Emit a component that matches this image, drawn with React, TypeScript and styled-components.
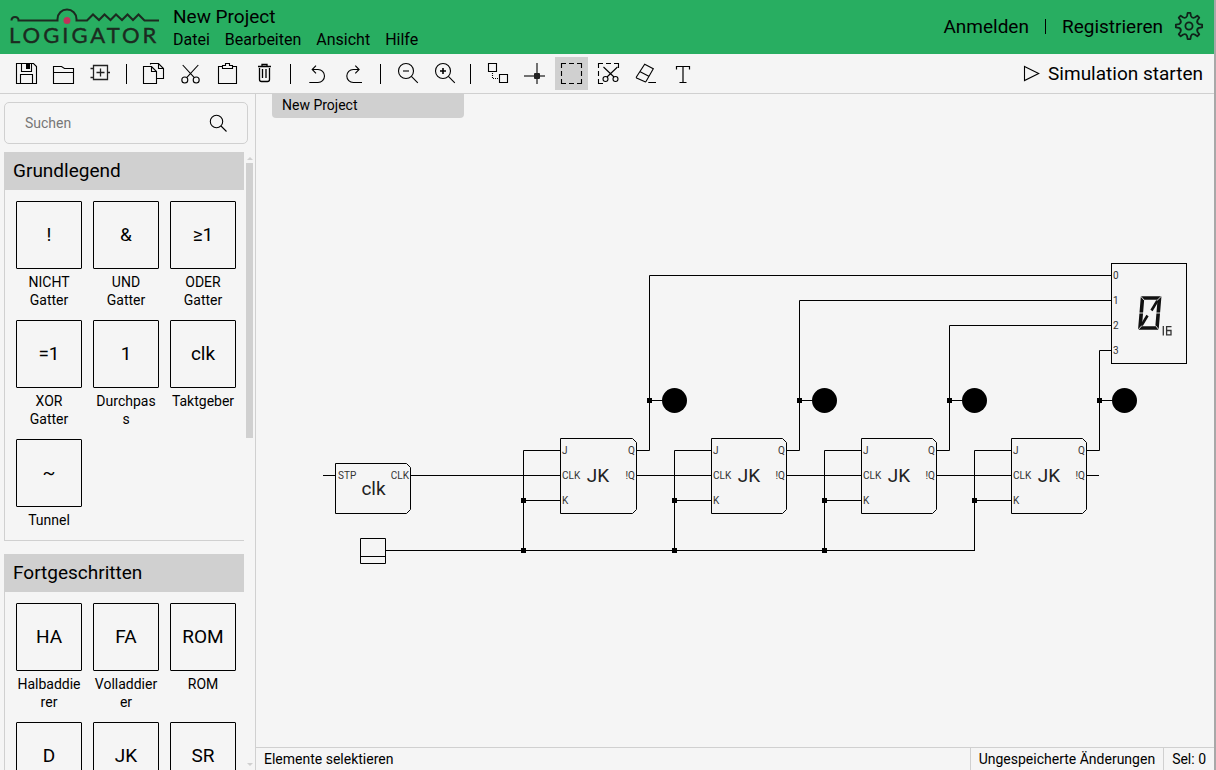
import React from 'react';
import styled, { createGlobalStyle } from 'styled-components';

const GlobalStyle = createGlobalStyle`
  *, *::before, *::after { box-sizing: border-box; }
  body {
    margin: 0;
    background: #f5f5f5;
    color: #000;
    font-family: Roboto, "Liberation Sans", sans-serif;
    font-size: 14px;
  }
  button, input { font: inherit; color: inherit; }
`;

const green = '#28ae61';
const line = '#d0d0d0';

const Page = styled.div`
  display: flex;
  flex-direction: column;
  height: 100vh;
  border-right: 2px solid #a8a8a8;
  background: #f5f5f5;
  overflow: hidden;
`;

const Header = styled.header`
  display: flex;
  align-items: center;
  flex: none;
  height: 54px;
  padding: 0 10px;
  background: ${green};
`;

const LogoSvg = styled.svg`
  display: block;
  flex: none;
  margin-right: 13px;
  font-family: Lato, sans-serif;
  font-size: 22px;
  letter-spacing: 3px;
`;

const Titles = styled.div`
  flex: 1;
  padding-top: 2px;
`;

const ProjectTitle = styled.h1`
  margin: 0;
  font-size: 19px;
  font-weight: 400;
  line-height: 24px;
`;

const Menu = styled.nav`
  display: flex;
  gap: 15px;
`;

const MenuButton = styled.button`
  padding: 0;
  border: 0;
  background: none;
  font-size: 16px;
  line-height: 22px;
`;

const Account = styled.div`
  display: flex;
  align-items: center;
  padding-bottom: 2px;
  font-size: 19px;
`;

const AccountLink = styled.a`
  color: inherit;
  text-decoration: none;
`;

const AccountDivider = styled.span`
  width: 1px;
  height: 15px;
  margin: 0 16px;
  background: #000;
`;

const PlainButton = styled.button`
  display: flex;
  align-items: center;
  padding: 0;
  border: 0;
  background: none;
`;

const SettingsButton = styled(PlainButton)`
  margin-left: 11px;
`;

const Toolbar = styled.div`
  display: flex;
  align-items: center;
  flex: none;
  gap: 4px;
  height: 40px;
  padding: 0 11px 0 10px;
  border-bottom: 1px solid ${line};
`;

const ToolButton = styled.button<{ $active?: boolean }>`
  display: grid;
  place-items: center;
  width: 33px;
  height: 33px;
  padding: 0;
  border: 0;
  background: ${(p) => (p.$active ? line : 'none')};
`;

const ToolDivider = styled.span`
  width: 1px;
  height: 20px;
  margin: 0 6px 0 5px;
  background: #000;
`;

const StartButton = styled(PlainButton)`
  gap: 4px;
  margin-left: auto;
  font-size: 19px;
`;

const Body = styled.div`
  display: flex;
  flex: 1;
  min-height: 0;
`;

const Sidebar = styled.aside`
  display: flex;
  flex-direction: column;
  flex: none;
  width: 256px;
  border-right: 1px solid ${line};
`;

const SearchBox = styled.label`
  display: flex;
  align-items: center;
  flex: none;
  height: 42px;
  margin: 8px 7px 8px 4px;
  padding: 0 18px 0 20px;
  border: 1px solid ${line};
  border-radius: 5px;
`;

const SearchInput = styled.input`
  flex: 1;
  min-width: 0;
  padding: 0;
  border: 0;
  outline: 0;
  background: none;
  &::placeholder { color: #777; opacity: 1; }
`;

const ListArea = styled.div`
  display: flex;
  flex: 1;
  min-height: 0;
`;

const Categories = styled.div`
  flex: 1;
  padding-left: 4px;
  overflow: hidden;
`;

const Category = styled.section`
  margin-bottom: 13px;
  border: solid ${line};
  border-width: 0 0 1px 1px;
`;

const CategoryTitle = styled.h2`
  margin: 0 0 0 -1px;
  padding-left: 9px;
  background: ${line};
  font-size: 19px;
  font-weight: 400;
  line-height: 38px;
`;

const Tiles = styled.div`
  display: grid;
  grid-template-columns: repeat(3, 66px);
  gap: 11px;
  padding: 11px;
`;

const Tile = styled.button`
  display: flex;
  flex-direction: column;
  gap: 4px;
  padding: 0;
  border: 0;
  background: none;
`;

const TileSymbol = styled.span`
  display: grid;
  place-items: center;
  width: 66px;
  height: 68px;
  padding-bottom: 2px;
  border: 1px solid #000;
  border-radius: 1px;
  font-size: 19px;
`;

const TileLabel = styled.span`
  width: 66px;
  line-height: 18px;
  overflow-wrap: anywhere;
`;

const ScrollTrack = styled.div`
  display: flex;
  flex-direction: column;
  align-items: center;
  justify-content: space-between;
  width: 11px;
  padding: 5px 2px 4px;
`;

const ScrollThumb = styled.span`
  width: 7px;
  height: 275px;
  margin: 3px 0 auto;
  background: ${line};
`;

const Arrow = styled.span<{ $down?: boolean }>`
  border: solid transparent;
  border-width: 0 3px;
  ${(p) => (p.$down ? 'border-top' : 'border-bottom')}: 3px solid ${line};
`;

const Workspace = styled.main`
  display: flex;
  flex-direction: column;
  flex: 1;
  min-width: 0;
`;

const Canvas = styled.div`
  position: relative;
  flex: 1;
  min-height: 0;
  overflow: hidden;
`;

const ProjectTab = styled.button`
  position: absolute;
  top: 0;
  left: 16px;
  width: 192px;
  height: 24px;
  padding: 0 10px 2px;
  border: 0;
  border-radius: 0 0 4px 4px;
  background: ${line};
  text-align: left;
`;

const Circuit = styled.svg`
  display: block;
  width: 100%;
  height: 100%;
`;

const StatusBar = styled.footer`
  display: flex;
  flex: none;
  height: 23px;
  border-top: 1px solid ${line};
  line-height: 22px;
`;

const StatusItem = styled.span<{ $grow?: boolean }>`
  flex: ${(p) => (p.$grow ? 1 : 'none')};
  padding: 0 8px;
  & + & { border-left: 1px solid ${line}; }
`;

const scissors = (
  <>
    <circle cx="4.8" cy="17" r="3" />
    <circle cx="16.2" cy="17" r="3" />
    <path d="M2.7 2 14.3 14.7M18.3 2 6.7 14.7" />
  </>
);

const magnifier = (
  <>
    <circle cx="9" cy="8" r="7.5" />
    <path d="M14.4 13.4 20.8 19.8" />
  </>
);

const dashes = 'M0 .5H21M0 20.5H21M.5 0V21M20.5 0V21';

const icons: Record<string, React.ReactNode> = {
  save: (
    <>
      <path d="M.5.5H17.5L20.5 3.5V20.5H.5ZM5.5.5V8.5H15.5V.5M4.5 20.5V11.5H16.5V20.5" />
      <path d="M10 1H14V6H10Z" fill="#000" stroke="none" />
    </>
  ),
  open: <path d="M.5 3.5H8.5L11.5 5.5H20.5V20.5H.5ZM.5 9.5H20.5" />,
  component: (
    <path d="M3.5 2.5H17.5V16.5H3.5ZM.5 5.5H3.5M.5 14.5H3.5M17.5 9.5H20M10.5 5.5V13.5M6.5 9.5H14.5" stroke="#222" strokeWidth="1.3" />
  ),
  copy: (
    <path d="M.5 3.5H8.5L13.5 8.5V20.5H.5ZM8.5 3.5V8.5H13.5M7.5 1.5V.5H15.5L20.5 5.5V15.5H14M15.5.5V5.5H20.5" />
  ),
  cut: scissors,
  paste: <path d="M5.5 3.5H1.5V20.5H19.5V3.5H15.5M5.5 2.5H8.5V.5H12.5V2.5H15.5V5.5H5.5Z" />,
  trash: (
    <path d="M4 3.5H17M8 3V1.5H13V3M5.5 5V16.5Q5.5 18.5 7.5 18.5H13.5Q15.5 18.5 15.5 16.5V5M8.5 6V15M12 6V15" strokeWidth="1.3" />
  ),
  undo: <path d="M2.3 19.5H11A6.4 6.4 0 0 0 11 6.5H5.5M9 2.6 5.2 6.5 9 10.4" />,
  redo: <path d="M18 19.5H9.3A6.4 6.4 0 0 1 9.3 6.5H14.8M11.3 2.6 15.1 6.5 11.3 10.4" />,
  zoomOut: (
    <>
      {magnifier}
      <path d="M6 8H12" />
    </>
  ),
  zoomIn: (
    <>
      {magnifier}
      <path d="M6 8H12M9 5V11" strokeWidth="1.6" />
    </>
  ),
  wire: (
    <>
      <path d="M1.5.5H9.5V8.5H1.5ZM12.5 11.5H20.5V19.5H12.5Z" />
      <path d="M5.5 10V15.5H12" strokeDasharray="1 1" />
    </>
  ),
  connect: (
    <>
      <path d="M0 13H21M13 0V21" stroke="#444" strokeWidth="1.5" />
      <rect x="10" y="10" width="6" height="6" rx="1" fill="#222" stroke="none" />
    </>
  ),
  select: <path d={dashes} strokeDasharray="5 3" />,
  cutArea: (
    <>
      <path d="M0 .5H21M.5 0V21M20.5 0V5M0 20.5H5" strokeDasharray="5 3" />
      <circle cx="7.5" cy="16" r="2.5" />
      <circle cx="17.5" cy="16" r="2.5" />
      <path d="M5.5 4 16 14M19.5 4 9 14" />
    </>
  ),
  eraser: <path d="M9.7 1.3 18.3 5.8 11 18.5Q10.6 19 10 18.8L1.6 15Q1.1 14.6 1.4 14ZM5.2 8.8 13.8 13.3M13.3 19.5H21" />,
  text: <path d="M4.5 6.5V3.5H17.5V6.5M11 3.5V19.5M7.5 19.5H14.5" strokeWidth="1.2" />,
  search: (
    <>
      <circle cx="8.5" cy="8.5" r="6.2" />
      <path d="M13 13 18.5 18.5" />
    </>
  ),
  play: <path d="M1.5 3.5 15.7 10.5 1.5 17.5Z" />,
};

function Icon({ name }: { name: string }) {
  return (
    <svg width="21" height="21" viewBox="0 0 21 21" fill="none" stroke="#000" strokeWidth="1.1" overflow="visible" aria-hidden>
      {icons[name]}
    </svg>
  );
}

const polar = (r: number, deg: number) => {
  const a = (deg * Math.PI) / 180;
  return `${(14 + r * Math.sin(a)).toFixed(2)} ${(14 - r * Math.cos(a)).toFixed(2)}`;
};

const gearPath =
  Array.from({ length: 8 }, (_, i) => {
    const t = i * 45;
    return `${i ? 'L' : 'M'}${polar(13.2, t - 6)}L${polar(13.2, t + 6)}L${polar(10.2, t + 11)}Q${polar(8, t + 22.5)} ${polar(10.2, t + 34)}`;
  }).join('') + 'Z';

function Logo() {
  return (
    <LogoSvg width="150" height="40" viewBox="0 0 150 40" role="img" aria-label="Logigator">
      <path
        d="M1.5 13.5Q1.5 10 5 10Q8.500 10 8.500 13.500H47.500V12A9.500 9.500 0 0 1 66.500 12V13.500H77L83 7.500 89 13 94.500 7.500 100.500 13 106 7.500 112 13 117.500 7.500 123 13 128.500 7.500 134.500 13.500H149"
        fill="none"
        stroke="#1c2a20"
        strokeWidth="2"
      />
      <circle cx="57" cy="13.500" r="3.500" fill="#c0335a" />
      <text x="-1" y="35.500" fill="#1c2a20" stroke="#1c2a20" strokeWidth="0.4">LOGIGATOR</text>
    </LogoSvg>
  );
}

const toolGroups = [
  [['save', 'Speichern'], ['open', 'Öffnen'], ['component', 'Neues Bauteil']],
  [['copy', 'Kopieren'], ['cut', 'Ausschneiden'], ['paste', 'Einfügen'], ['trash', 'Löschen']],
  [['undo', 'Rückgängig'], ['redo', 'Wiederholen']],
  [['zoomOut', 'Verkleinern'], ['zoomIn', 'Vergrößern']],
  [
    ['wire', 'Leitung zeichnen'],
    ['connect', 'Leitungen verbinden'],
    ['select', 'Elemente selektieren'],
    ['cutArea', 'Bereich ausschneiden'],
    ['eraser', 'Radierer'],
    ['text', 'Text'],
  ],
];

const categories = [
  {
    title: 'Grundlegend',
    tiles: [
      ['!', 'NICHT Gatter'],
      ['&', 'UND Gatter'],
      ['≥1', 'ODER Gatter'],
      ['=1', 'XOR Gatter'],
      ['1', 'Durchpass'],
      ['clk', 'Taktgeber'],
      ['~', 'Tunnel'],
    ],
  },
  {
    title: 'Fortgeschritten',
    tiles: [
      ['HA', 'Halbaddierer'],
      ['FA', 'Volladdierer'],
      ['ROM', 'ROM'],
      ['D', ''],
      ['JK', ''],
      ['SR', ''],
    ],
  },
];

function Pin({ x, y, end, children }: { x: number; y: number; end?: boolean; children: string }) {
  return (
    <text x={x} y={y + 4} fontSize="10" fill="#333" stroke="none" textAnchor={end ? 'end' : 'start'}>
      {children}
    </text>
  );
}

function FlipFlop({ x, width }: { x: number; width: number }) {
  const right = width + 0.5;
  return (
    <g transform={`translate(${x} 344)`}>
      <path d={`M.5.5H${right - 4}L${right} 4.500V71.500L${right - 4} 75.500H.5Z`} />
      <Pin x={2} y={12}>J</Pin>
      <Pin x={2} y={37}>CLK</Pin>
      <Pin x={2} y={62}>K</Pin>
      <Pin x={width - 1} y={12} end>Q</Pin>
      <Pin x={width - 1} y={37} end>!Q</Pin>
      <text x="38" y="44" fontSize="19" fill="#222" stroke="none" textAnchor="middle">JK</text>
    </g>
  );
}

const flipFlops = [
  { x: 304, width: 76, bus: 267.5 },
  { x: 455, width: 75, bus: 418.5 },
  { x: 605, width: 75, bus: 568.5 },
  { x: 755, width: 75, bus: 718.5 },
];
const outputs = [
  { x: 393.5, top: 181.5 },
  { x: 543.5, top: 206.5 },
  { x: 693.5, top: 231.5 },
  { x: 843.5, top: 256.5 },
];

function CircuitDrawing() {
  return (
    <Circuit fill="none" stroke="#000" strokeWidth="1" role="img" aria-label="Zähler aus vier JK-Flipflops">
      <path d="M67 381.500H79M155 381.500H304M381 381.500H455M530 381.500H605M680 381.500H755M830 381.500H843" />
      <path d="M130 456.500H718.500" />
      {flipFlops.map(({ x, width, bus }, i) => (
        <g key={x}>
          <path d={`M${x} 356.500H${bus}V457M${bus} 406.500H${x}`} />
          <rect x={bus - 2.5} y="404" width="5" height="5" fill="#000" stroke="none" />
          {i < 3 && <rect x={bus - 2.5} y="454" width="5" height="5" fill="#000" stroke="none" />}
          <FlipFlop x={x} width={width} />
        </g>
      ))}
      {outputs.map((o, i) => (
        <g key={o.x}>
          <path d={`M${flipFlops[i].x + flipFlops[i].width} 356.500H${o.x}V${o.top}H855M${o.x} 306.500H${o.x + 14}`} />
          <rect x={o.x - 2.5} y="304" width="5" height="5" fill="#000" stroke="none" />
          <circle cx={o.x + 25} cy="306.500" r="12.500" fill="#000" stroke="none" />
        </g>
      ))}
      <path d="M79.500 369.500H150.500L154.500 373.500V415.500L150.500 419.500H79.500Z" />
      <Pin x={82} y={381}>STP</Pin>
      <Pin x={153} y={381} end>CLK</Pin>
      <text x="117.500" y="401" fontSize="19" fill="#222" stroke="none" textAnchor="middle">clk</text>
      <path d="M104.500 444.500H129.500V469.500H104.500ZM104.500 462.500H129.500" />
      <rect x="855.500" y="169.500" width="75" height="100" />
      {outputs.map((o, i) => (
        <Pin key={i} x={857} y={o.top - 0.5}>{String(i)}</Pin>
      ))}
      <path d="M886.500 204H903.500L901 234H884Z" strokeWidth="3.600" stroke="#111" />
      <path d="M901.500 206.500 895.500 216.500M891.500 221.500 885.500 231.500" strokeWidth="2.600" stroke="#111" />
      <path
        d="M884.500 202 888.500 206.500M906 201.500 901 206.500M881.500 236.500 886 231.500M903.500 236.500 899.500 231.500M882.500 219H888M899.500 219H905"
        strokeWidth="0.900"
        stroke="#f5f5f5"
      />
      <path d="M907.300 232V241.500M915.500 232.600H910.600V240.900H915V236.500H910.600" stroke="#333" strokeWidth="1.300" />
    </Circuit>
  );
}

export default function App() {
  return (
    <Page>
      <GlobalStyle />
      <Header>
        <Logo />
        <Titles>
          <ProjectTitle>New Project</ProjectTitle>
          <Menu>
            {['Datei', 'Bearbeiten', 'Ansicht', 'Hilfe'].map((m) => (
              <MenuButton key={m}>{m}</MenuButton>
            ))}
          </Menu>
        </Titles>
        <Account>
          <AccountLink href="#login">Anmelden</AccountLink>
          <AccountDivider />
          <AccountLink href="#register">Registrieren</AccountLink>
          <SettingsButton aria-label="Einstellungen">
            <svg width="30" height="30" viewBox="-1 -1 30 30" fill="none" stroke="#10231a" strokeWidth="1.8" strokeLinejoin="round">
              <path d={gearPath} />
              <circle cx="14" cy="14" r="3.600" />
            </svg>
          </SettingsButton>
        </Account>
      </Header>
      <Toolbar>
        {toolGroups.map((group, i) => (
          <React.Fragment key={i}>
            {i > 0 && <ToolDivider />}
            {group.map(([name, label]) => (
              <ToolButton key={name} aria-label={label} $active={name === 'select'}>
                <Icon name={name} />
              </ToolButton>
            ))}
          </React.Fragment>
        ))}
        <StartButton>
          <Icon name="play" />
          Simulation starten
        </StartButton>
      </Toolbar>
      <Body>
        <Sidebar>
          <SearchBox>
            <SearchInput type="text" placeholder="Suchen" aria-label="Suchen" />
            <Icon name="search" />
          </SearchBox>
          <ListArea>
            <Categories>
              {categories.map((c) => (
                <Category key={c.title}>
                  <CategoryTitle>{c.title}</CategoryTitle>
                  <Tiles>
                    {c.tiles.map(([symbol, label]) => (
                      <Tile key={symbol}>
                        <TileSymbol>{symbol}</TileSymbol>
                        {label && <TileLabel>{label}</TileLabel>}
                      </Tile>
                    ))}
                  </Tiles>
                </Category>
              ))}
            </Categories>
            <ScrollTrack>
              <Arrow />
              <ScrollThumb />
              <Arrow $down />
            </ScrollTrack>
          </ListArea>
        </Sidebar>
        <Workspace>
          <Canvas>
            <CircuitDrawing />
            <ProjectTab>New Project</ProjectTab>
          </Canvas>
          <StatusBar>
            <StatusItem $grow>Elemente selektieren</StatusItem>
            <StatusItem>Ungespeicherte Änderungen</StatusItem>
            <StatusItem>Sel: 0</StatusItem>
          </StatusBar>
        </Workspace>
      </Body>
    </Page>
  );
}
